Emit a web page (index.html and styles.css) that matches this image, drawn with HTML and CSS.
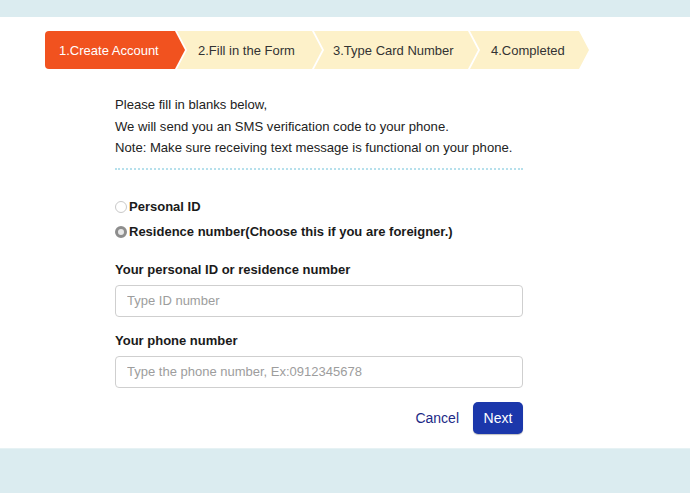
FILE: index.html
```html
<!DOCTYPE html>
<html lang="en">
<head>
<meta charset="utf-8">
<title>Create Account</title>
<link rel="stylesheet" href="styles.css">
</head>
<body>
<div class="band band-top"></div>
<main class="main">
  <ol class="steps">
    <li class="step step-active">1.Create Account</li>
    <li class="step s2">2.Fill in the Form</li>
    <li class="step s3">3.Type Card Number</li>
    <li class="step s4">4.Completed</li>
  </ol>
  <div class="content">
    <div class="intro">
      <p>Please fill in blanks below,</p>
      <p>We will send you an SMS verification code to your phone.</p>
      <p>Note: Make sure receiving text message is functional on your phone.</p>
    </div>
    <div class="divider"></div>
    <div class="radios">
      <label class="radio-row"><input type="radio" name="idtype" class="radio"><span>Personal ID</span></label>
      <label class="radio-row"><input type="radio" name="idtype" class="radio" checked><span>Residence number(Choose this if you are foreigner.)</span></label>
    </div>
    <div class="field field-id">
      <label class="field-label">Your personal ID or residence number</label>
      <input class="text-input" type="text" placeholder="Type ID number">
    </div>
    <div class="field field-phone">
      <label class="field-label">Your phone number</label>
      <input class="text-input" type="text" placeholder="Type the phone number, Ex:0912345678">
    </div>
    <div class="actions">
      <button class="btn-cancel" type="button">Cancel</button>
      <button class="btn-next" type="button">Next</button>
    </div>
  </div>
</main>
<div class="band band-bottom"></div>
</body>
</html>
```
FILE: styles.css
```css
html, body {
  margin: 0;
  padding: 0;
}
body {
  font-family: "Liberation Sans", Arial, sans-serif;
  color: #222;
  background: #dcedf1;
  width: 690px;
  height: 493px;
  overflow: hidden;
}
.band {
  background: #dbecf0;
}
.band-top {
  height: 17px;
}
.band-bottom {
  height: 46px;
  border-top: 1px solid #e6f2f4;
}
.main {
  background: #fff;
  height: 431px;
  padding-top: 14px;
  box-sizing: border-box;
}
.steps {
  list-style: none;
  margin: 0;
  padding: 0 0 0 45px;
  display: flex;
  height: 38px;
}
.step {
  display: flex;
  align-items: center;
  height: 38px;
  box-sizing: border-box;
  font-size: 13px;
  color: #333;
  background: #fdf1c9;
  padding-left: 21px;
  margin-left: -8px;
  clip-path: polygon(0 0, calc(100% - 10px) 0, 100% 50%, calc(100% - 10px) 100%, 0 100%, 10px 50%);
}
.step-active {
  background: #f1521f;
  color: #fff;
  margin-left: 0;
  padding-left: 14px;
  width: 140px;
  border-radius: 4px 0 0 4px;
  clip-path: polygon(0 0, calc(100% - 10px) 0, 100% 50%, calc(100% - 10px) 100%, 0 100%);
}
.s2 { width: 145px; }
.s3 { width: 164px; padding-left: 19px; }
.s4 { width: 119px; }
.content {
  margin-left: 115px;
  width: 408px;
}
.intro {
  margin-top: 25px;
  font-size: 13.1px;
  line-height: 21.5px;
  color: #222;
}
.intro p {
  margin: 0;
}
.divider {
  margin-top: 9px;
  border-top: 2px dotted #b6e0ec;
}
.radios {
  margin-top: 28px;
  display: flex;
  flex-direction: column;
  gap: 7px;
}
.radio-row {
  display: flex;
  align-items: center;
  height: 18px;
  font-size: 13px;
  font-weight: bold;
  color: #1a1a1a;
}
.radio {
  appearance: none;
  -webkit-appearance: none;
  width: 12px;
  height: 12px;
  margin: 0 2px 0 0;
  border-radius: 50%;
  border: 1px solid #c9c9c9;
  background: #fff;
  box-sizing: border-box;
  flex: none;
}
.radio:checked {
  border: 3px solid #8d8d8d;
  background: #e8e8e8;
}
.field {
  display: flex;
  flex-direction: column;
}
.field-id {
  margin-top: 21px;
}
.field-phone {
  margin-top: 16px;
}
.field-label {
  font-size: 13px;
  font-weight: bold;
  color: #1a1a1a;
  line-height: 16px;
  margin-bottom: 7px;
}
.text-input {
  height: 32px;
  box-sizing: border-box;
  border: 1px solid #cfcfcf;
  border-radius: 4px;
  padding: 0 11px;
  font-family: "Liberation Sans", Arial, sans-serif;
  font-size: 13px;
  color: #333;
  outline: none;
}
.text-input::placeholder {
  color: #9d9d9d;
}
.actions {
  margin-top: 14px;
  display: flex;
  justify-content: flex-end;
  align-items: center;
  gap: 14px;
}
.btn-cancel {
  background: none;
  border: none;
  padding: 0;
  font-family: "Liberation Sans", Arial, sans-serif;
  font-size: 14px;
  color: #1c2a86;
}
.btn-next {
  width: 50px;
  height: 32px;
  border: none;
  border-radius: 5px;
  background: #1b37ab;
  color: #fff;
  font-family: "Liberation Sans", Arial, sans-serif;
  font-size: 14px;
  box-shadow: 0 1px 1px rgba(0,0,0,0.25);
}
```
